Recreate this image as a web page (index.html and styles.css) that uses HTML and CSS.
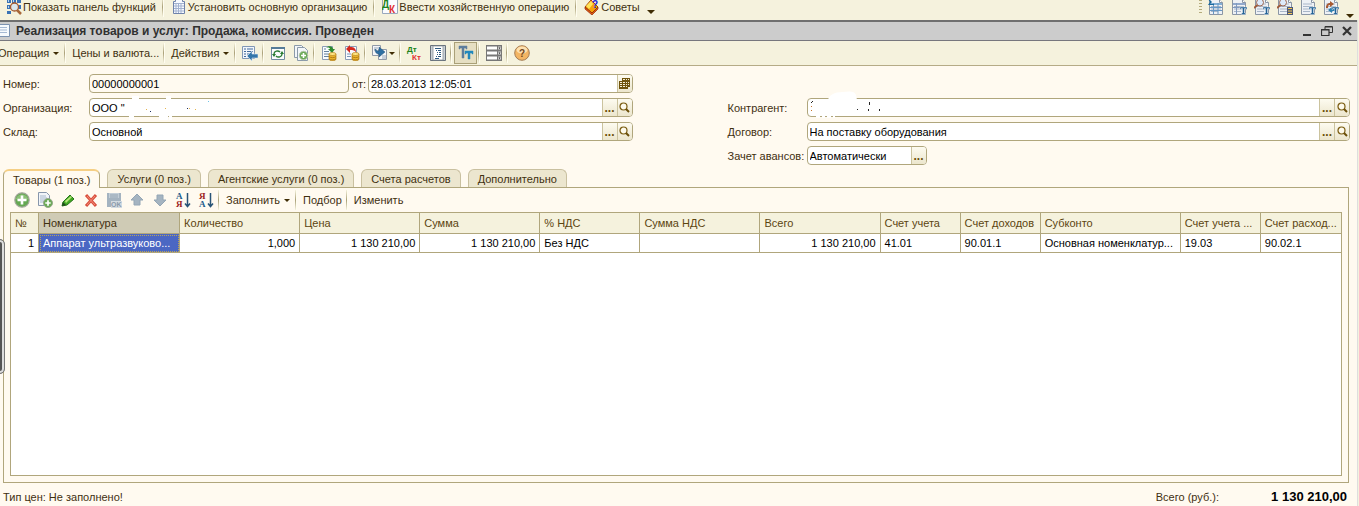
FILE: index.html
```html
<!DOCTYPE html>
<html lang="ru">
<head>
    <meta charset="UTF-8">
    <meta name="viewport" content="width=device-width, initial-scale=1.0">
    <title>Реализация товаров и услуг</title>
    <link rel="stylesheet" href="styles.css">
</head>
<body>
    <!-- Shared icon shapes -->
    <svg class="sprite" aria-hidden="true">
        <symbol id="i-search" viewBox="0 0 11 11">
            <circle cx="4.5" cy="4.5" r="3.5" fill="#fdfaec" stroke="#7a5c10" stroke-width="1.200"/>
            <path d="M7 7l3 3" stroke="#6b4f08" stroke-width="2"/>
        </symbol>
        <symbol id="i-page" viewBox="0 0 16 16">
            <path d="M1.500 .5h10l3 3v12h-13z" fill="#eef1f5" stroke="#8b96a5"/>
            <path d="M11.500 .5v3h3" fill="#fff" stroke="#8b96a5"/>
            <path d="M3 5h9M3 7.500h10M3 10h10M3 12.500h7" stroke="#a9b6c8"/>
        </symbol>
        <symbol id="i-t" viewBox="0 0 16 16">
            <path d="M9 8h7v2.500h-1V9.500h-1.500V14h1v1.500h-4V14h1V9.500H10v1H9z" fill="#226296" stroke="#fff" stroke-width=".4"/>
        </symbol>
        <symbol id="i-coins" viewBox="0 0 16 16">
            <path d="M8 9v5c0 2.300 7 2.300 7 0V9z" fill="#e9b52c" stroke="#b47b12" stroke-width=".7"/>
            <path d="M8 11.500c1 1.500 6 1.500 7 0M8 13.700c1 1.500 6 1.500 7 0" fill="none" stroke="#a36c0d" stroke-width=".7"/>
            <ellipse cx="11.500" cy="9" rx="3.500" ry="1.500" fill="#ffe683" stroke="#b98317" stroke-width=".7"/>
        </symbol>
        <symbol id="i-plus" viewBox="0 0 16 16">
            <circle cx="8" cy="8" r="7.200" fill="#65a852" stroke="#a3a79b" stroke-width="1.200"/>
            <path d="M2 7c1-6 11-6 12 0-3 2-9 2-12 0" fill="#a5cf8f" opacity=".6"/>
            <path d="M8 3.500v9M3.500 8h9" stroke="#fff" stroke-width="2.600"/>
        </symbol>
        <symbol id="i-copy" viewBox="0 0 16 16">
            <path d="M1.500 .5h8l3 3v10h-11z" fill="#f1f4f8" stroke="#8796ab"/>
            <path d="M3 4h6M3 6h7M3 8h6M3 10h4" stroke="#a7b8cd"/>
            <circle cx="11" cy="11" r="4.500" fill="#6aab55" stroke="#98a88e"/>
            <path d="M11 8.300v5.400M8.300 11h5.400" stroke="#fff" stroke-width="1.700"/>
        </symbol>
    </svg>

    <!-- Application toolbar -->
    <div class="app-bar">
        <button class="tool">
            <svg class="icon" viewBox="0 0 16 16"><path d="M1 0h4v4H1zM6 0h4v4H6zM11 0h4v4h-4zM1 6h4v4H1zM11 6h4v4h-4zM1 12h4v3H1z" fill="#3972b5"/><path d="M2 1h1v2H2zM7 1h1v2H7zM2 7h1v2H2z" fill="#b7d7f2"/><circle cx="8.500" cy="8" r="4" fill="#d9e7ee" stroke="#a45a30" stroke-width="1.300"/><path d="M11 11l4 4" stroke="#a8683a" stroke-width="2.500"/></svg>
            Показать панель функций
        </button>
        <span class="sep"></span>
        <button class="tool">
            <svg class="icon" viewBox="0 0 16 16"><path d="M4.500 .5h7v2h2v12h-11V2.500h2z" fill="#f7faff" stroke="#6f83ab"/><path d="M3 4.500h10M3 7h10M3 9.500h10M3 12h10M5 4v10M7.500 4v10M10 4v10" stroke="#a2b2d0"/></svg>
            Установить основную организацию
        </button>
        <span class="sep"></span>
        <button class="tool">
            <svg class="icon" viewBox="0 0 16 16"><path d="M.5.5h15v14H.5z" fill="#fafcff" stroke="#99a8bd"/><text x="0" y="9" class="glyph green">Д</text><text x="7" y="14" class="glyph red">К</text></svg>
            Ввести хозяйственную операцию
        </button>
        <span class="sep"></span>
        <button class="tool">
            <svg class="icon" viewBox="0 0 16 16"><path d="M1 8l6-7 7 7-6 6z" fill="#f6a20b" stroke="#a44708"/><path d="M1 8v2l7 6 6-6V8l-6 6z" fill="#e55b10" stroke="#8c2a08" stroke-width=".7"/><path d="M2 7l5-5 2 3-4 5z" fill="#ffe45a"/><text x="8" y="9" class="glyph blue">?</text></svg>
            Советы
        </button>
        <button class="more" aria-label="Ещё"><span class="caret"></span></button>

        <div class="app-right">
            <span class="grip"></span>
            <button class="tool" aria-label="Отчёт"><svg class="icon" viewBox="0 0 16 16"><use href="#i-page"/><path d="M2 4h12v2H2z" fill="#81aed5"/><path d="M5.500 4v11M10 4v11M2 8.500h12M2 11.500h12" stroke="#6798c5"/><path d="M0 0h6v1H2l2 2-2 2h4v1H0l2-3z" fill="#19689b"/></svg></button>
            <button class="tool" aria-label="Таблица"><svg class="icon" viewBox="0 0 16 16"><use href="#i-page"/><path d="M2 4h12v2H2z" fill="#91a9cc"/><path d="M5.500 4v11M2 8.500h9" stroke="#8099c0"/><use href="#i-t"/></svg></button>
            <button class="tool" aria-label="Поиск"><svg class="icon" viewBox="0 0 16 16"><use href="#i-page"/><circle cx="6" cy="3.500" r="3.500" fill="#dceafb" stroke="#9e6954"/><path d="M3.500 6L0 9" stroke="#9e5b3a" stroke-width="2"/><use href="#i-t"/></svg></button>
            <button class="tool" aria-label="Список"><svg class="icon" viewBox="0 0 16 16"><use href="#i-page"/><circle cx="6" cy="3.500" r="3.500" fill="#dceafb" stroke="#9e6954"/><path d="M3.500 6L0 9" stroke="#9e5b3a" stroke-width="2"/><path d="M10 8h6v8h-6z" fill="#4e5878"/><path d="M11 9.500h4M11 12h4M11 14.500h4" stroke="#f5c94e"/></svg></button>
            <button class="tool" aria-label="Текст"><svg class="icon" viewBox="0 0 16 16"><use href="#i-page"/><use href="#i-t"/></svg></button>
            <button class="tool" aria-label="Обмен"><svg class="icon" viewBox="0 0 16 16"><use href="#i-page"/><path d="M3 9c0-4 2-5 4-5V2l4 3-4 3V6C5 6 5 7 5 9z" fill="#a75a32"/><path d="M5 11l4-3v2h3v2H9v2z" fill="#2b80b1"/><use href="#i-t"/></svg></button>
            <button class="more" aria-label="Ещё"><span class="caret"></span></button>
        </div>
    </div>

    <div class="window">
        <!-- Title bar -->
        <header class="title-bar">
            <svg class="title-icon" viewBox="0 0 10 14"><path d="M0 .5h9.500v12H0" fill="#f7fafd" stroke="#7d93b0"/><path d="M0 3.500h7M0 6h7M0 8.500h7" stroke="#a6b9d3"/></svg>
            <h1>Реализация товаров и услуг: Продажа, комиссия. Проведен</h1>
            <div class="win-buttons">
                <button aria-label="Свернуть"><svg viewBox="0 0 12 12"><path d="M2 10h8" stroke="#333" stroke-width="2"/></svg></button>
                <button aria-label="Восстановить"><svg viewBox="0 0 12 12"><path d="M4 4V1.500h7.500v6H8M4 2h7" fill="none" stroke="#333"/><path d="M.5 4.500H8v6H.5zM.5 5H8" fill="none" stroke="#333" stroke-width="1.200"/></svg></button>
                <button aria-label="Закрыть"><svg viewBox="0 0 12 12"><path d="M2 2l8 8M10 2l-8 8" stroke="#333" stroke-width="2.200"/></svg></button>
            </div>
        </header>

        <!-- Document toolbar -->
        <div class="doc-bar">
            <button class="tool">Операция <span class="caret"></span></button>
            <span class="sep"></span>
            <button class="tool">Цены и валюта...</button>
            <span class="sep"></span>
            <button class="tool">Действия <span class="caret"></span></button>
            <span class="sep"></span>
            <button class="tool" aria-label="Перейти"><svg class="icon" viewBox="0 0 16 16"><path d="M.5 1.500h12v12H.5z" fill="#f2f6fb" stroke="#8197b5"/><path d="M2 4h2M5 4h6M2 6.500h2M5 6.500h6M2 9h2M5 9h3M2 11.500h2" stroke="#426b9c"/><path d="M5 11l5-5v3h6v4h-6v3z" fill="#3476aa" stroke="#dce8f2" stroke-width=".6"/></svg></button>
            <span class="sep"></span>
            <button class="tool" aria-label="Обновить"><svg class="icon" viewBox="0 0 16 16"><path d="M1.500 2.500h13v12h-13z" fill="#fafcfd" stroke="#718ba0"/><path d="M1 2h14v2H1z" fill="#557b98"/><path d="M4 9c0-3 4-4 6-2M12 9c0 3-4 4-6 2" fill="none" stroke="#287b32" stroke-width="1.400"/><path d="M10 9h4l-2-3zM2 9h4l-2 3z" fill="#287b32"/></svg></button>
            <button class="tool" aria-label="Скопировать"><svg class="icon" viewBox="0 0 16 16"><path d="M1.500 .5h7l2 2v10h-9z" fill="#f3f6f9" stroke="#8b9aaa"/><path d="M4.500 2.500h7l3 3v10h-10z" fill="#f3f6f9" stroke="#8b9aaa"/><circle cx="10.500" cy="10.500" r="4.200" fill="#6aaa57" stroke="#b5c8aa"/><path d="M10.500 8v5M8 10.500h5" stroke="#fff" stroke-width="1.600"/></svg></button>
            <span class="sep"></span>
            <button class="tool" aria-label="Провести"><svg class="icon" viewBox="0 0 16 16"><path d="M1.500 1.500h10v13h-10z" fill="#f8fbfe" stroke="#8b9cb5"/><path d="M3 4h2M3 6.500h5M3 9h5M3 11.500h5" stroke="#64829e"/><path d="M5 3c2-3 7-2 7 1h2l-3 4-4-4h2c0-1-2-2-4-1" fill="#2e8b2e"/><use href="#i-coins"/></svg></button>
            <button class="tool" aria-label="Отмена проведения"><svg class="icon" viewBox="0 0 16 16"><path d="M1.500 1.500h11v13h-11z" fill="#f8fbfe" stroke="#8b9cb5"/><path d="M3 9h4M3 11.500h4" stroke="#7895b7"/><path d="M2 4l4-4v2c4 0 6 1 6 6-1-3-3-3-6-3v3z" fill="#d3281e"/><use href="#i-coins"/></svg></button>
            <span class="sep"></span>
            <button class="tool" aria-label="На основании"><svg class="icon" viewBox="0 0 16 16"><path d="M.5.5h8v10h-8zM6.500 4.500h8v10h-8z" fill="#f4f6f8" stroke="#919aa7"/><path d="M2 3h4M2 5h3M10 11h4M10 13h4" stroke="#9aa9bb"/><path d="M3 4c0 4 2 5 4 5v3l6-5-6-5v4c-2 0-3-1-4-2" fill="#2d6fa2" stroke="#245277" stroke-width=".5"/></svg><span class="caret"></span></button>
            <span class="sep"></span>
            <button class="tool" aria-label="Дт Кт"><svg class="icon wide" viewBox="0 0 16 16"><text x="0" y="7" class="glyph small green">Дт</text><text x="5" y="15" class="glyph small red">Кт</text></svg></button>
            <button class="tool" aria-label="Журнал"><svg class="icon" viewBox="0 0 16 16"><path d="M.5.500h15v15H.5z" fill="#c9d0d6" stroke="#68717b"/><path d="M3 1h10v14H3z" fill="#fff" stroke="#7d8790" stroke-width=".7"/><path d="M5 3.500h6M6 5.500h1M8 5.500h3M7 7.500h1M9 7.500h2M7 9.500h1M9 9.500h2M6 11.500h1M8 11.500h3M5 13.500h4" stroke="#2d5a82"/></svg></button>
            <span class="sep"></span>
            <button class="tool pressed" aria-label="Отборы"><svg class="icon" viewBox="0 0 16 16"><path d="M1 1h8v3H8V3H6v10H4V3H2v1H1z" fill="#5e7d9c" stroke="#5e7d9c" stroke-width=".5"/><path d="M7 6h8v3h-1V8h-2v6h-2V8H8v1H7z" fill="#2288bd" stroke="#2288bd" stroke-width=".5"/></svg></button>
            <span class="sep"></span>
            <button class="tool" aria-label="Строки"><svg class="icon" viewBox="0 0 16 16"><path d="M0 0h16v16H0z" fill="#777"/><path d="M1 1.500h10v3H1zM1 6.500h10v3H1zM1 11.500h10v3H1z" fill="#fff"/><path d="M12 1.500h3v3h-3zM12 6.500h3v3h-3zM12 11.500h3v3h-3z" fill="#d5d5d5"/><path d="M12.500 2.500h2l-1 1.500zM12.500 7.500h2l-1 1.500zM12.500 12.500h2l-1 1.500z" fill="#222"/></svg></button>
            <span class="sep"></span>
            <button class="tool" aria-label="Справка"><svg class="icon" viewBox="0 0 16 16"><circle cx="8" cy="8" r="7.300" fill="#f3b563" stroke="#a47c54"/><ellipse cx="8" cy="5" rx="5.500" ry="3.500" fill="#fde1b1"/><text x="5" y="12" class="glyph brown">?</text></svg></button>
        </div>

        <!-- Document header fields -->
        <form class="fields">
            <label for="number">Номер:</label>
            <div class="pair">
                <div class="field number"><input type="text" id="number" value="00000000001" readonly></div>
                <label for="date">от:</label>
                <div class="field">
                    <input type="text" id="date" value="28.03.2013 12:05:01">
                    <button type="button" aria-label="Календарь"><svg viewBox="0 0 11 11"><path d="M3 0h8v9H9v2H0V3h3z" fill="#70540c"/><path d="M4 1.500h2M7 1.500h1M9 1.500h1M1 4.500h2M4 4.500h2M7 4.500h1M1 6.500h2M4 6.500h2M7 6.500h1M1 8.500h2M4 8.500h2M7 8.500h1M9 4.500h1M9 6.500h1" stroke="#f6efd5"/></svg></button>
                </div>
            </div>

            <label for="org" class="start">Организация:</label>
            <div class="field">
                <input type="text" id="org" value="ООО &quot;">
                <svg class="smudge" viewBox="0 0 150 24"><path d="M42 0h7v4h-7zM76 0h5v4h-5zM39 19h5v5h-5zM69 18h9v6h-9zM79 20h3v4h-3z" fill="#fff"/><path d="M56 13h1v1h-1zM75 12h1v1h-1zM99 12h1v1h-1zM105 13h1v1h-1z" fill="#e5b44d"/><path d="M60 15h1v1h-1zM97 12h1v1h-1z" fill="#203060"/><path d="M118 5h1v1h-1z" fill="#70c5e8"/></svg>
                <button type="button">...</button>
                <button type="button" aria-label="Открыть"><svg viewBox="0 0 11 11"><use href="#i-search"/></svg></button>
            </div>
            <label for="partner" class="col-right">Контрагент:</label>
            <div class="field">
                <input type="text" id="partner" value="">
                <svg class="smudge" viewBox="0 0 150 24"><path d="M20 4c1-5 6-8 15-8 6-1 12-1 13 3l1 5zM8 19h4v3h-4zM14 19h3v3h-3zM19 19h4v3h-4zM25 19h2v3h-2z" fill="#fff"/><path d="M3 6h1V5h1v1h-1v1h-1zM49 13h1v1h-1zM61 6h1v3h-1zM60 13h1v2h-1zM71 13h1v2h-1z" fill="#252525"/><path d="M3 10h1v1h-1zM3 14h1v1h-1z" fill="#c6742c"/></svg>
                <button type="button">...</button>
                <button type="button" aria-label="Открыть"><svg viewBox="0 0 11 11"><use href="#i-search"/></svg></button>
            </div>

            <label for="store" class="start">Склад:</label>
            <div class="field">
                <input type="text" id="store" value="Основной">
                <button type="button">...</button>
                <button type="button" aria-label="Открыть"><svg viewBox="0 0 11 11"><use href="#i-search"/></svg></button>
            </div>
            <label for="contract" class="col-right">Договор:</label>
            <div class="field">
                <input type="text" id="contract" value="На поставку оборудования">
                <button type="button">...</button>
                <button type="button" aria-label="Открыть"><svg viewBox="0 0 11 11"><use href="#i-search"/></svg></button>
            </div>

            <label for="advance" class="col-right">Зачет авансов:</label>
            <div class="field short">
                <input type="text" id="advance" value="Автоматически">
                <button type="button">...</button>
            </div>
        </form>

        <!-- Tabs -->
        <nav class="tabs">
            <button class="tab active">Товары (1 поз.)</button>
            <button class="tab">Услуги (0 поз.)</button>
            <button class="tab">Агентские услуги (0 поз.)</button>
            <button class="tab">Счета расчетов</button>
            <button class="tab">Дополнительно</button>
        </nav>

        <section class="panel">
            <div class="table-bar">
                <button class="tool" aria-label="Добавить"><svg class="icon" viewBox="0 0 16 16"><use href="#i-plus"/></svg></button>
                <button class="tool" aria-label="Добавить копированием"><svg class="icon" viewBox="0 0 16 16"><use href="#i-copy"/></svg></button>
                <button class="tool" aria-label="Изменить строку"><svg class="icon" viewBox="0 0 16 16"><path d="M3 10l7-7 4 4-7 6-5 1z" fill="#42a923" stroke="#27731b"/><path d="M5 9l6-5 1 1-6 6z" fill="#b8e87d"/><path d="M3 10l3 3-4 1z" fill="#214e1c"/></svg></button>
                <button class="tool" aria-label="Удалить"><svg class="icon" viewBox="0 0 16 16"><path d="M3 3l10 11M13 3L3 14" stroke="#d94f3d" stroke-width="3"/><path d="M4 4l8 9M12 4l-8 9" stroke="#f28b77"/></svg></button>
                <button class="tool" aria-label="Закончить" disabled><svg class="icon" viewBox="0 0 16 16"><path d="M1 1h14v14H1z" fill="#a4b3c0"/><path d="M3 1h10v5H3z" fill="#c3ced7"/><path d="M4 3h8M4 5h8" stroke="#93a4b3"/><path d="M5 9h11v7H5z" fill="#d4dbe1"/><text x="5" y="15" class="glyph tiny grey">OK</text></svg></button>
                <button class="tool" aria-label="Вверх" disabled><svg class="icon" viewBox="0 0 16 16"><path d="M8 2l6 6h-3v5H5V8H2z" fill="#a5b4c1" stroke="#94a6b5"/></svg></button>
                <button class="tool" aria-label="Вниз" disabled><svg class="icon" viewBox="0 0 16 16"><path d="M8 14l6-6h-3V3H5v5H2z" fill="#a5b4c1" stroke="#94a6b5"/></svg></button>
                <button class="tool" aria-label="По возрастанию"><svg class="icon" viewBox="0 0 16 16"><text x="1" y="7" class="glyph small serif navy">А</text><text x="1" y="15" class="glyph small serif dark-red">Я</text><path d="M12.500 1v13M10 11.500l2.500 3 2.500-3" fill="none" stroke="#285477" stroke-width="1.500"/></svg></button>
                <button class="tool" aria-label="По убыванию"><svg class="icon" viewBox="0 0 16 16"><text x="1" y="7" class="glyph small serif dark-red">Я</text><text x="1" y="15" class="glyph small serif navy">А</text><path d="M12.500 1v13M10 11.500l2.500 3 2.500-3" fill="none" stroke="#285477" stroke-width="1.500"/></svg></button>
                <span class="sep"></span>
                <button class="tool">Заполнить <span class="caret"></span></button>
                <span class="sep"></span>
                <button class="tool">Подбор</button>
                <span class="sep"></span>
                <button class="tool">Изменить</button>
            </div>

            <div class="grid-box">
                <table>
                    <colgroup>
                        <col class="c-num"><col class="c-name"><col class="c-sum"><col class="c-sum"><col class="c-sum"><col class="c-vat"><col class="c-sum"><col class="c-sum"><col class="c-acc"><col class="c-acc"><col class="c-sub"><col class="c-acc"><col class="c-acc">
                    </colgroup>
                    <thead>
                        <tr>
                            <th>№</th>
                            <th class="current">Номенклатура</th>
                            <th>Количество</th>
                            <th>Цена</th>
                            <th>Сумма</th>
                            <th>% НДС</th>
                            <th>Сумма НДС</th>
                            <th>Всего</th>
                            <th>Счет учета</th>
                            <th>Счет доходов</th>
                            <th>Субконто</th>
                            <th>Счет учета ...</th>
                            <th>Счет расход...</th>
                        </tr>
                    </thead>
                    <tbody>
                        <tr>
                            <td class="num">1</td>
                            <td class="selected">Аппарат ультразвуково...</td>
                            <td class="num">1,000</td>
                            <td class="num">1 130 210,00</td>
                            <td class="num">1 130 210,00</td>
                            <td>Без НДС</td>
                            <td></td>
                            <td class="num">1 130 210,00</td>
                            <td>41.01</td>
                            <td>90.01.1</td>
                            <td>Основная номенклатур...</td>
                            <td>19.03</td>
                            <td>90.02.1</td>
                        </tr>
                    </tbody>
                </table>
            </div>
        </section>

        <!-- Totals -->
        <footer class="totals">
            <span>Тип цен: Не заполнено!</span>
            <span class="total-label">Всего (руб.):</span>
            <strong>1 130 210,00</strong>
        </footer>
    </div>

    <div class="side-handle"></div>
</body>
</html>
```
FILE: styles.css
```css
/* General */
* {
    box-sizing: border-box;
}

body {
    margin: 0;
    min-height: 100vh;
    display: flex;
    flex-direction: column;
    overflow: hidden;
    font-family: "Liberation Sans", Arial, sans-serif;
    font-size: 11px;
    line-height: 14px;
    color: #3f3010;
    background-color: #f5f2dd;
}

button,
input {
    font: inherit;
    color: inherit;
    margin: 0;
    padding: 0;
    border: none;
    background: none;
}

.sprite {
    position: absolute;
    width: 0;
    height: 0;
}

.icon {
    width: 16px;
    height: 16px;
    flex: none;
}

.wide {
    overflow: visible;
}

.glyph {
    font-size: 10px;
    font-weight: bold;
}

.small {
    font-size: 8px;
}

.tiny {
    font-size: 7px;
}

.serif {
    font-family: "Liberation Serif", serif;
    font-size: 9px;
}

.green {
    fill: #20831c;
}

.red {
    fill: #e03030;
}

.blue {
    fill: #1720d8;
}

.brown {
    fill: #71461e;
}

.grey {
    fill: #8a9aaa;
}

.navy {
    fill: #205c8c;
}

.dark-red {
    fill: #9c2020;
}

/* Toolbars */
.app-bar,
.doc-bar,
.table-bar {
    display: flex;
    align-items: center;
}

.app-bar {
    height: 14px;
    margin-bottom: 6px;
    padding-left: 2px;
}

.tool {
    display: flex;
    align-items: center;
    gap: 3px;
    height: 22px;
    padding: 0 3px 0 4px;
    white-space: nowrap;
}

.app-bar .tool {
    gap: 1px;
}

.sep {
    flex: none;
    width: 2px;
    height: 20px;
    margin: 0 2px 0 1px;
    background: linear-gradient(to bottom, #f5f2dd, #aaa078, #f5f2dd);
    border-right: 1px solid #fffdf0;
}

.app-bar .sep {
    margin: 0 3px;
}

.caret {
    width: 0;
    height: 0;
    border: 3px solid transparent;
    border-top-color: #3f2c04;
    border-bottom: none;
}

.more {
    align-self: flex-end;
    height: 4px;
    padding: 0 4px;
}

.more .caret {
    display: block;
    border-width: 4px 4px 0;
}

.app-right {
    display: flex;
    align-items: center;
    margin-left: auto;
    padding-right: 1px;
}

.grip {
    width: 3px;
    height: 14px;
    margin-right: 2px;
    background: repeating-linear-gradient(to bottom, #b5ab7c 0, #b5ab7c 1px, #f5f2dd 1px, #f5f2dd 3px);
}

/* Document window */
.window {
    flex: 1;
    display: flex;
    flex-direction: column;
    margin-right: 1px;
    border-right: 1px solid #dedede;
    background-color: #fffaf0;
}

.title-bar {
    display: flex;
    align-items: center;
    height: 21px;
    background-color: #ccc;
    border-top: 2px solid #6f6f6f;
    border-bottom: 1px solid #77777d;
}

.title-icon {
    width: 10px;
    height: 14px;
}

.title-bar h1 {
    margin: 0 0 0 6px;
    font-size: 12px;
    line-height: 16px;
    color: #303030;
}

.win-buttons {
    display: flex;
    gap: 8px;
    margin-left: auto;
    padding-right: 4px;
}

.win-buttons button,
.win-buttons svg {
    display: block;
    width: 12px;
    height: 12px;
}

.doc-bar {
    height: 25px;
    margin-bottom: 8px;
    border-bottom: 1px solid #b5ab86;
    background-color: #f5f2dd;
}

.doc-bar .tool:first-child {
    margin-left: -6px;
}

.doc-bar .tool .caret,
.table-bar .tool .caret {
    margin: 0 1px;
}

.doc-bar .icon + .caret {
    margin: 0 0 0 -2px;
}

.pressed {
    background-color: #e6dfc3;
    border: 1px solid #aaa078;
    padding: 0 2px 0 3px;
}

/* Header fields */
.fields {
    display: grid;
    grid-template-columns: 87px 1fr 94px 80px 1fr;
    row-gap: 5px;
    padding: 0 7px 0 2px;
}

.fields label {
    height: 19px;
    padding: 1px 0 0 1px;
    line-height: 19px;
    white-space: nowrap;
}

.start {
    grid-column: 1;
}

.col-right {
    grid-column: 4;
}

.pair {
    display: flex;
    gap: 2px;
}

.field {
    position: relative;
    flex: 1;
    display: flex;
    height: 19px;
    border: 1px solid #b0a67c;
    border-radius: 4px;
    background-color: #fff;
}

.number {
    flex: 0 0 260px;
    background-color: #fffaf0;
}

.short {
    width: 120px;
}

.field input {
    flex: 1;
    min-width: 0;
    padding: 0 2px;
    color: #000;
    outline: none;
}

.field button {
    display: flex;
    align-items: center;
    justify-content: center;
    width: 15px;
    border-left: 1px solid #cbc39e;
    background: linear-gradient(to bottom, #fdfbf0, #ece6cd);
    font-size: 12px;
    font-weight: bold;
    color: #6b4f08;
}

.field button:last-child {
    border-radius: 0 3px 3px 0;
}

.field button svg {
    flex: none;
    width: 11px;
    height: 11px;
}

.smudge {
    position: absolute;
    left: 0;
    top: -3px;
    width: 150px;
    height: 24px;
    overflow: visible;
    pointer-events: none;
}

/* Tabs */
.tabs {
    display: flex;
    gap: 7px;
    margin-top: 4px;
    padding-left: 3px;
}

.tab {
    height: 18px;
    padding: 0 9px;
    border: 1px solid #c9c0a0;
    border-bottom: none;
    border-radius: 6px 6px 0 0;
    background-color: #ece6cf;
    white-space: nowrap;
}

.tab.active {
    height: 19px;
    margin-bottom: -1px;
    border-color: #b0a67c;
    border-top: 2px solid #f5cf85;
    background-color: #fffaf0;
    z-index: 1;
}

.panel {
    flex: 1;
    display: flex;
    flex-direction: column;
    margin: 0 8px 0 3px;
    padding: 0 6px 6px;
    border: 1px solid #b0a67c;
}

.table-bar {
    height: 24px;
}

/* Goods table */
.grid-box {
    flex: 1;
    border: 1px solid #b0a67c;
    background-color: #fff;
}

table {
    width: 100%;
    table-layout: fixed;
    border-collapse: separate;
    border-spacing: 0;
}

.c-num {
    width: 28px;
}

.c-name {
    width: 141px;
}

.c-sum {
    width: 120px;
}

.c-vat {
    width: 100px;
}

.c-acc {
    width: 80px;
}

.c-sub {
    width: 140px;
}

th,
td {
    padding: 0 4px;
    border-right: 1px solid #b0a67c;
    border-bottom: 1px solid #b0a67c;
    text-align: left;
    white-space: nowrap;
    overflow: hidden;
}

th:last-child,
td:last-child {
    border-right: none;
}

th {
    height: 21px;
    font-weight: normal;
    color: #5c4510;
    background-color: #f5f2dd;
}

th.current {
    background-color: #cfcbb5;
    color: #3f3010;
}

td {
    height: 19px;
    color: #000;
}

td.num {
    text-align: right;
}

td.selected {
    color: #fff;
    background-color: #4b67c3;
    outline: 1px dotted #b9a45c;
    outline-offset: -2px;
}

/* Totals */
.totals {
    display: flex;
    align-items: center;
    height: 23px;
    padding: 5px 10px 0 3px;
}

.total-label {
    margin-left: auto;
}

.totals strong {
    width: 128px;
    font-size: 13px;
    text-align: right;
    color: #000;
}

/* Handle of the hidden side panel */
.side-handle {
    position: absolute;
    left: -8px;
    top: 239px;
    width: 13px;
    height: 135px;
    border: 1px solid #777;
    border-radius: 5px;
    background-color: #555;
    box-shadow: inset 0 0 0 2px #ddd;
}
```
